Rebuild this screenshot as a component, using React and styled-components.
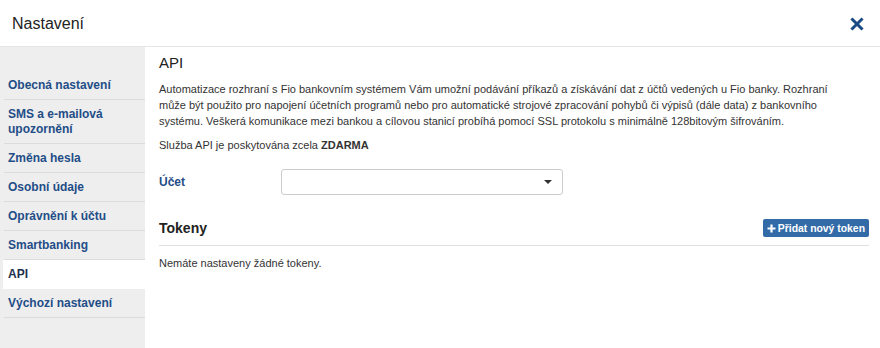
import React from "react";
import styled, { createGlobalStyle } from "styled-components";

const Global = createGlobalStyle`
  html, body { margin: 0; padding: 0; background: #fff; }
  body { font-family: "Liberation Sans", Arial, sans-serif; color: #333; }
  * { box-sizing: border-box; }
`;

const Modal = styled.div`
  width: 880px;
  height: 348px;
  display: flex;
  flex-direction: column;
  background: #fff;
  overflow: hidden;
`;

const Header = styled.div`
  height: 47px;
  flex: none;
  display: flex;
  align-items: center;
  justify-content: space-between;
  padding: 0 16px 0 12px;
  border-bottom: 1px solid #e5e5e5;
`;

const Title = styled.h1`
  margin: 0;
  font-size: 16px;
  font-weight: normal;
  color: #222;
  padding-top: 1px;
`;

const Close = styled.button`
  border: 0;
  background: none;
  padding: 0;
  width: 14px;
  height: 14px;
  display: flex;
  cursor: pointer;
  margin-top: 2px;
`;

const Body = styled.div`
  flex: 1;
  display: flex;
`;

const Sidebar = styled.nav`
  width: 145px;
  flex: none;
  background: #eeeeee;
  padding-top: 24px;
`;

const NavItem = styled.div`
  margin-left: ${p => (p.$active ? "3px" : "4px")};
  padding: 7px 8px 6px ${p => (p.$active ? "5px" : "4px")};
  font-size: 12px;
  line-height: 15px;
  font-weight: bold;
  color: ${p => (p.$active ? "#1c2f4d" : "#1f4d87")};
  background: ${p => (p.$active ? "#fff" : "transparent")};
  border-bottom: 1px solid ${p => (p.$active ? "#fff" : "#dcdcdc")};
  cursor: pointer;
`;

const Content = styled.main`
  flex: 1;
  padding: 7px 11px 0 14px;
`;

const H2 = styled.h2`
  margin: 0 0 9px;
  font-size: 15px;
  font-weight: normal;
  color: #222;
  line-height: 18px;
`;

const P = styled.p`
  margin: 0 12px 8px 0;
  font-size: 11px;
  line-height: 16px;
  color: #333;
`;

const FormRow = styled.div`
  display: flex;
  align-items: center;
  margin-top: 16px;
  height: 26px;
`;

const Label = styled.label`
  width: 122px;
  font-size: 12px;
  font-weight: bold;
  color: #1f4d87;
`;

const Select = styled.div`
  width: 282px;
  height: 26px;
  border: 1px solid #cccccc;
  border-radius: 3px;
  display: flex;
  align-items: center;
  justify-content: flex-end;
  padding-right: 10px;
`;

const Caret = styled.span`
  width: 0;
  height: 0;
  border-left: 4px solid transparent;
  border-right: 4px solid transparent;
  border-top: 4px solid #333;
`;

const SectionHead = styled.div`
  margin-top: 24px;
  display: flex;
  align-items: center;
  justify-content: space-between;
  padding-bottom: 8px;
  border-bottom: 1px solid #e0e0e0;
`;

const H3 = styled.h3`
  margin: 0;
  font-size: 14px;
  font-weight: bold;
  color: #222;
`;

const Button = styled.button`
  border: 0;
  border-radius: 2px;
  background: #336ba8;
  color: #fff;
  font-family: "Liberation Sans", Arial, sans-serif;
  font-size: 10.4px;
  font-weight: bold;
  height: 18px;
  padding: 0 4px 0 4px;
  display: flex;
  align-items: center;
  gap: 2px;
  cursor: pointer;
`;

const Empty = styled.p`
  margin: 11px 0 0;
  font-size: 11px;
  color: #333;
`;

const items = [
  "Obecná nastavení",
  "SMS a e-mailová upozornění",
  "Změna hesla",
  "Osobní údaje",
  "Oprávnění k účtu",
  "Smartbanking",
  "API",
  "Výchozí nastavení",
];

export default function App() {
  return (
    <>
      <Global />
      <Modal>
        <Header>
          <Title>Nastavení</Title>
          <Close aria-label="Zavřít">
            <svg width="14" height="14" viewBox="0 0 14 14">
              <path d="M2.5 2.5 L11.5 11.5 M11.5 2.5 L2.5 11.5" stroke="#1b4a85" strokeWidth="3" strokeLinecap="square" />
            </svg>
          </Close>
        </Header>
        <Body>
          <Sidebar>
            {items.map(it => (
              <NavItem key={it} $active={it === "API"}>
                {it}
              </NavItem>
            ))}
          </Sidebar>
          <Content>
            <H2>API</H2>
            <P>
              Automatizace rozhraní s Fio bankovním systémem Vám umožní podávání příkazů a získávání dat z účtů vedených u Fio banky. Rozhraní může být použito pro napojení účetních programů nebo pro automatické strojové zpracování pohybů či výpisů (dále data) z bankovního systému. Veškerá komunikace mezi bankou a cílovou stanicí probíhá pomocí SSL protokolu s minimálně 128bitovým šifrováním.
            </P>
            <P>
              Služba API je poskytována zcela <b>ZDARMA</b>
            </P>
            <FormRow>
              <Label>Účet</Label>
              <Select>
                <Caret />
              </Select>
            </FormRow>
            <SectionHead>
              <H3>Tokeny</H3>
              <Button>
                <svg width="9" height="9" viewBox="0 0 9 9">
                  <path d="M4.5 0.5 V8.5 M0.5 4.5 H8.5" stroke="#fff" strokeWidth="2.2" />
                </svg>
                Přidat nový token
              </Button>
            </SectionHead>
            <Empty>Nemáte nastaveny žádné tokeny.</Empty>
          </Content>
        </Body>
      </Modal>
    </>
  );
}
